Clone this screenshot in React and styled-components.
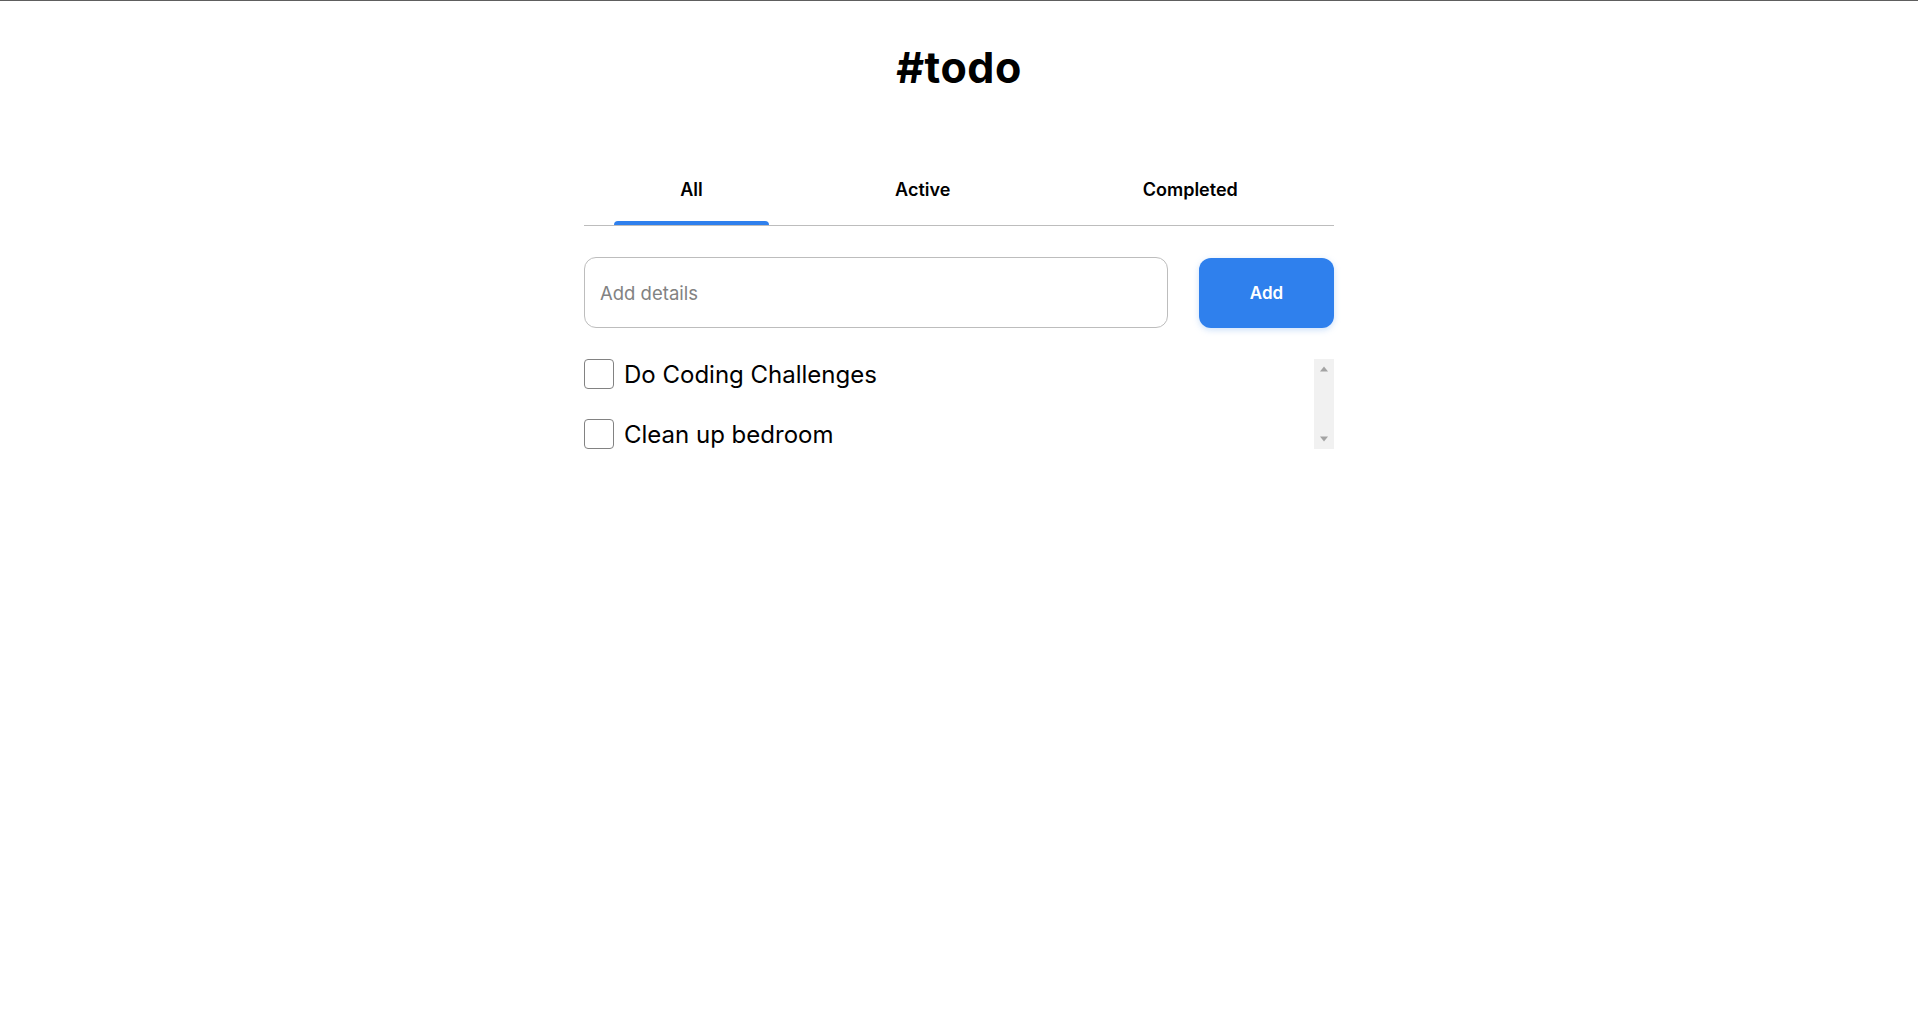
import React, { useState } from "react";
import styled, { createGlobalStyle } from "styled-components";

const GlobalStyle = createGlobalStyle`
  html, body {
    margin: 0;
    padding: 0;
    background: #ffffff;
  }
  body {
    font-family: "Inter", "Noto Sans", sans-serif;
    color: #000;
  }
  * {
    box-sizing: border-box;
  }
`;

const tabs = ["All", "Active", "Completed"];

const initialTodos = [
  { id: 1, text: "Do Coding Challenges", done: false },
  { id: 2, text: "Clean up bedroom", done: false },
];

function Arrow({ down }) {
  return (
    <svg width="10" height="6" viewBox="0 0 10 6">
      <path d={down ? "M1 0.5 L5 5.5 L9 0.5 Z" : "M1 5.5 L5 0.5 L9 5.5 Z"} fill="#a3a3a3" />
    </svg>
  );
}

export default function App() {
  const [activeTab, setActiveTab] = useState("All");
  const [todos, setTodos] = useState(initialTodos);
  const [details, setDetails] = useState("");

  const visible = todos.filter((t) =>
    activeTab === "All" ? true : activeTab === "Active" ? !t.done : t.done
  );

  // add a new item from the input
  const handleAdd = () => {
    if (!details.trim()) return;
    setTodos([...todos, { id: Date.now(), text: details, done: false }]);
    setDetails("");
  };

  const toggle = (id) => {
    setTodos(todos.map((t) => (t.id === id ? { ...t, done: !t.done } : t)));
  };

  return (
    <Page>
      <GlobalStyle />
      <Title>#todo</Title>
      <Container>
        <TabBar>
          {tabs.map((tab) => (
            <Tab key={tab} $active={activeTab === tab} onClick={() => setActiveTab(tab)}>
              {tab}
            </Tab>
          ))}
        </TabBar>

        <Form
          onSubmit={(e) => {
            e.preventDefault();
            handleAdd();
          }}
        >
          <DetailsInput
            placeholder="Add details"
            value={details}
            onChange={(e) => setDetails(e.target.value)}
          />
          <AddButton type="submit">Add</AddButton>
        </Form>

        <ListBox>
          <List>
            {visible.map((todo) => (
              <Item key={todo.id}>
                <Checkbox type="checkbox" checked={todo.done} onChange={() => toggle(todo.id)} />
                <ItemText $done={todo.done}>{todo.text}</ItemText>
              </Item>
            ))}
          </List>
          <ScrollTrack aria-hidden="true">
            <ScrollButton>
              <Arrow />
            </ScrollButton>
            <ScrollButton>
              <Arrow down />
            </ScrollButton>
          </ScrollTrack>
        </ListBox>
      </Container>
    </Page>
  );
}

const Page = styled.div`
  min-height: 100vh;
  border-top: 1px solid #5e5e5e;
`;

const Title = styled.h1`
  margin: 0;
  padding-top: 42px;
  text-align: center;
  font-size: 43px;
  line-height: 48px;
  font-weight: 700;
  letter-spacing: 0.5px;
  color: #000;
`;

const Container = styled.div`
  width: 750px;
  margin: 0 auto;
`;

const TabBar = styled.nav`
  display: flex;
  justify-content: space-around;
  margin-top: 89px;
  border-bottom: 1px solid #bdbdbd;
`;

const Tab = styled.button`
  position: relative;
  border: none;
  background: none;
  padding: 0 66px 25px;
  font-family: inherit;
  font-size: 18px;
  line-height: 20px;
  font-weight: 600;
  color: #000;
  cursor: pointer;

  &::after {
    content: "";
    position: absolute;
    left: 0;
    right: 0;
    bottom: 0;
    height: 4px;
    border-radius: 4px 4px 0 0;
    background: ${(p) => (p.$active ? "#2f80ed" : "transparent")};
  }
`;

const Form = styled.form`
  display: flex;
  align-items: center;
  gap: 31px;
  margin-top: 31px;
`;

const DetailsInput = styled.input`
  flex: 1;
  height: 71px;
  padding: 0 15px;
  border: 1px solid #bdbdbd;
  border-radius: 12px;
  font-family: inherit;
  font-size: 18.5px;
  color: #333;
  outline: none;

  &::placeholder {
    color: #828282;
  }
`;

const AddButton = styled.button`
  width: 135px;
  height: 70px;
  border: none;
  border-radius: 12px;
  background: #2f80ed;
  box-shadow: 0 2px 6px rgba(127, 177, 243, 0.4);
  color: #fff;
  font-family: inherit;
  font-size: 17px;
  font-weight: 600;
  cursor: pointer;
`;

const ListBox = styled.div`
  display: flex;
  height: 90px;
  margin-top: 31px;
`;

const List = styled.ul`
  flex: 1;
  list-style: none;
  margin: 0;
  padding: 0;
  overflow: hidden;
  display: flex;
  flex-direction: column;
  gap: 30px;
`;

const ScrollTrack = styled.div`
  width: 20px;
  display: flex;
  flex-direction: column;
  justify-content: space-between;
  background: #f1f1f1;
`;

const ScrollButton = styled.div`
  height: 20px;
  display: flex;
  align-items: center;
  justify-content: center;
`;

const Item = styled.li`
  display: flex;
  align-items: center;
  gap: 10px;
  height: 30px;
  flex-shrink: 0;
`;

const Checkbox = styled.input`
  appearance: none;
  margin: 0;
  width: 30px;
  height: 30px;
  border: 1.5px solid #828282;
  border-radius: 4px;
  background: #fff;
  cursor: pointer;

  &:checked {
    background: #2f80ed;
    border-color: #2f80ed;
  }
`;

const ItemText = styled.span`
  font-size: 24px;
  font-weight: 400;
  color: #000;
  text-decoration: ${(p) => (p.$done ? "line-through" : "none")};
`;
